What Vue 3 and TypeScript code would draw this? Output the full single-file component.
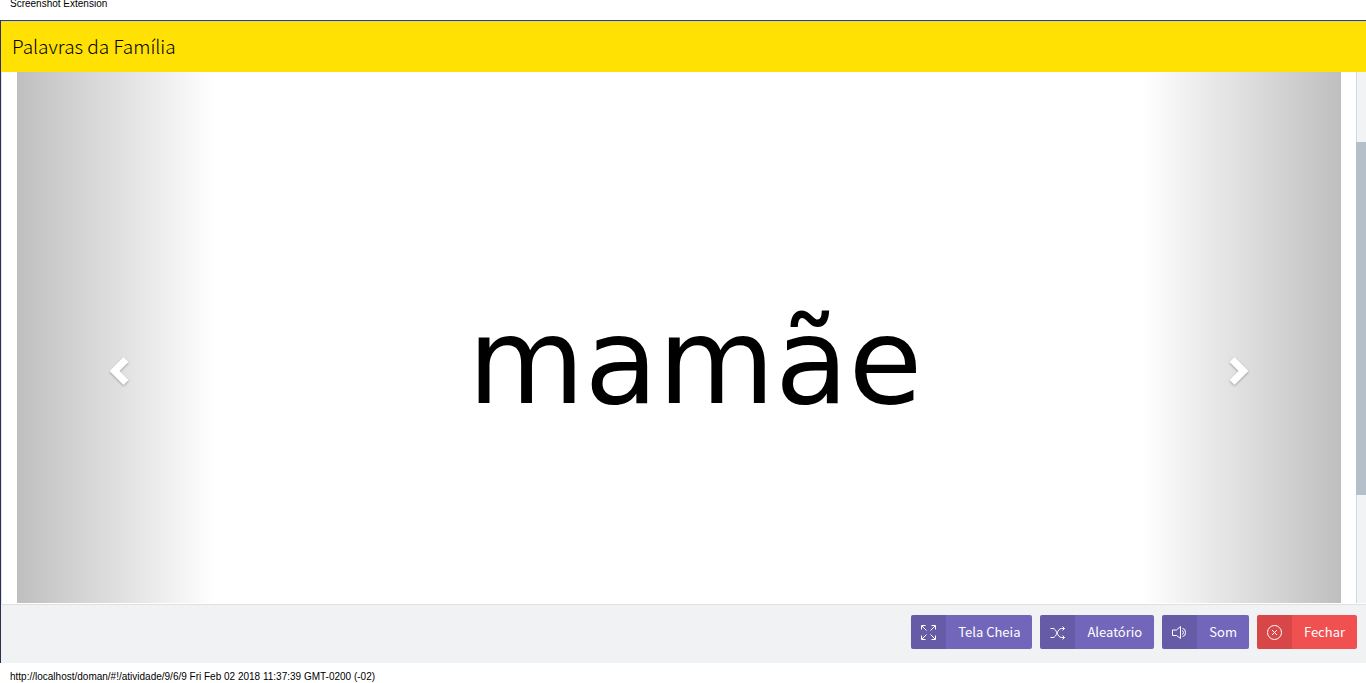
<script setup lang="ts">
import { ref } from 'vue'

type IconName = 'expand' | 'shuffle' | 'sound' | 'close'

interface Action {
  label: string
  icon: IconName
  danger?: boolean
}

const title = ref<string>('Palavras da Família')
const word = ref<string>('mamãe')

const actions: Action[] = [
  { label: 'Tela Cheia', icon: 'expand' },
  { label: 'Aleatório', icon: 'shuffle' },
  { label: 'Som', icon: 'sound' },
  { label: 'Fechar', icon: 'close', danger: true },
]

const paths: Record<IconName, string> = {
  expand:
    'M5.5 5.5L1 1M0.5 4.500V0.5H4.500M9.5 5.5L14 1M10.500 0.5h4V4.500M5.5 9.5L1 14M0.5 10.500v4H4.500M9.5 9.5L14 14M10.500 14.500h4V10.500',
  shuffle:
    'M0.5 3.5H3C7 3.500 7 12.500 11.500 12.500H14.500M0.500 12.500H3C7 12.500 7 3.500 11.500 3.500H14.500M12.500 1.500l2 2-2 2M12.500 10.500l2 2-2 2',
  sound:
    'M8.500 1.500v12L4.500 10.500H0.500V5H4.500zM10.500 5.500q2 2 0 4M10.500 3.500q3 0 3 4t-3 4',
  close:
    'M7.500 0.500a7 7 0 1 0 0 14a7 7 0 1 0 0-14M5 5l5 5M10 5l-5 5',
}
</script>

<template>
  <div class="page">
    <div class="caption top">Screenshot Extension</div>
    <main class="window">
      <header class="header">
        <h1>{{ title }}</h1>
      </header>
      <div class="body">
        <section class="carousel">
          <button class="side prev" type="button" aria-label="Anterior">
            <svg class="chevron" viewBox="0 0 20 28"><path d="M14.500 0L19.500 5 10.500 14 19.500 23 14.500 28 0.500 14z" /></svg>
          </button>
          <div class="word">{{ word }}</div>
          <button class="side next" type="button" aria-label="Próximo">
            <svg class="chevron" viewBox="0 0 20 28"><path d="M5.500 0L0.500 5 9.500 14 0.500 23 5.500 28 19.500 14z" /></svg>
          </button>
        </section>
        <div class="track"><div class="thumb"></div></div>
      </div>
      <footer class="footer">
        <button
          v-for="action in actions"
          :key="action.label"
          type="button"
          class="btn"
          :class="{ danger: action.danger }"
        >
          <span class="icon">
            <svg viewBox="0 0 15 15"><path :d="paths[action.icon]" /></svg>
          </span>
          <span class="label">{{ action.label }}</span>
        </button>
      </footer>
    </main>
    <div class="caption bottom">http://localhost/doman/#!/atividade/9/6/9 Fri Feb 02 2018 11:37:39 GMT-0200 (-02)</div>
  </div>
</template>

<style>
body {
  margin: 0;
  background: #fff;
}
</style>

<style scoped>
.page {
  display: flex;
  flex-direction: column;
  height: 100vh;
  overflow: hidden;
  color: #000;
  font-family: "Noto Sans CJK SC", "Noto Sans", sans-serif;
}
.caption {
  flex: none;
  box-sizing: border-box;
  height: 20px;
  padding-left: 10px;
  font: 10px/20px "Liberation Sans", Arial, sans-serif;
}
.top {
  line-height: 8px;
}
.bottom {
  line-height: 28px;
}
.window {
  flex: 1;
  min-height: 0;
  display: flex;
  flex-direction: column;
  border-top: 1px solid #3c3f4a;
  border-left: 1px solid #2b3050;
}
.header {
  flex: none;
  box-sizing: border-box;
  height: 51px;
  padding-left: 11px;
  border-top: 1px solid #d5cf9a;
  background: #ffe104;
}
h1 {
  margin: 0;
  font-size: 19px;
  line-height: 48px;
  font-weight: 300;
}
.body {
  flex: 1;
  min-height: 0;
  display: flex;
  padding-bottom: 1px;
  border-left: 1px solid #e2e3e8;
}
.carousel {
  flex: 1;
  display: flex;
  margin: 0 15px;
  justify-content: space-between;
}
.side {
  width: 15%;
  padding: 0;
  border: 0;
  display: flex;
  align-items: center;
  justify-content: center;
  box-sizing: border-box;
  padding-top: 67px;
}
.prev {
  background: linear-gradient(to right, #bfbfbf, #fff);
  padding-left: 5px;
}
.next {
  background: linear-gradient(to left, #bfbfbf, #fff);
  padding-right: 5px;
}
.chevron {
  width: 20px;
  height: 28px;
  overflow: visible;
  fill: #fff;
  filter: drop-shadow(0 1px 1px rgba(0, 0, 0, 0.3));
}
.word {
  display: flex;
  align-items: center;
  padding: 48px 0 0 32px;
  font: 120px/1 "DejaVu Sans", sans-serif;
}
.track {
  box-sizing: border-box;
  width: 10px;
  border-left: 1px solid #cfd9e0;
  background: #f1f3f5;
}
.thumb {
  height: 66.500%;
  margin-top: 70px;
  margin-left: -1px;
  background: #b4bfca;
}
.footer {
  flex: none;
  box-sizing: border-box;
  height: 59px;
  padding: 10px 9px;
  display: flex;
  justify-content: flex-end;
  align-items: flex-start;
  gap: 8px;
  border-top: 1px solid #e0e0e0;
  background: #f1f2f4;
}
.btn {
  display: flex;
  height: 34px;
  padding: 0;
  overflow: hidden;
  border: 0;
  border-radius: 2px;
  background: #7266ba;
  color: #fff;
  font: 13px/34px "Noto Sans CJK SC", "Noto Sans", sans-serif;
}
.danger {
  background: #f05050;
}
.icon {
  width: 35px;
  display: flex;
  align-items: center;
  justify-content: center;
  background: rgba(0, 0, 0, 0.1);
}
.icon svg {
  width: 15px;
  height: 15px;
  fill: none;
  stroke: #fff;
  stroke-width: 1;
}
.label {
  padding: 0 12px;
}
</style>
